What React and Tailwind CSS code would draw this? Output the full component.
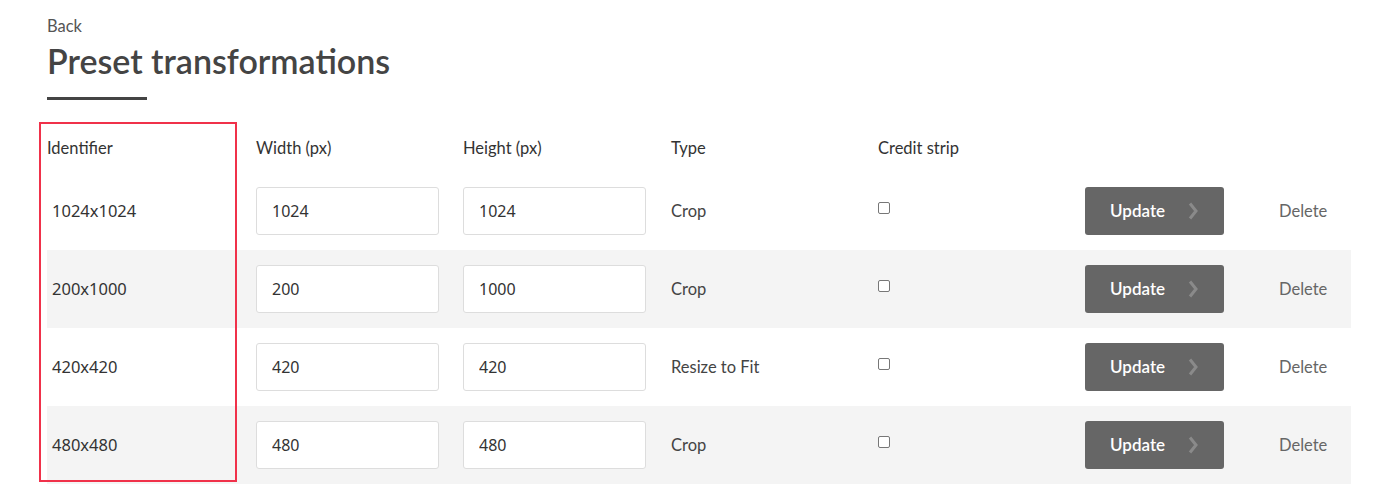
import React from 'react';

const rows = [
  { id: '1024x1024', w: '1024', h: '1024', type: 'Crop' },
  { id: '200x1000', w: '200', h: '1000', type: 'Crop' },
  { id: '420x420', w: '420', h: '420', type: 'Resize to Fit' },
  { id: '480x480', w: '480', h: '480', type: 'Crop' },
];

const cols = 'grid grid-cols-[209px_207px_208px_207px_207px_194px_72px] items-center';

const Chevron = () => (
  <svg width="10" height="18" viewBox="0 0 10 18" fill="none" stroke="#8a8a8a" strokeWidth="3">
    <path d="M2 1.5 L8 9 L2 16.5" />
  </svg>
);

const App = () => {
  return (
    <div className="min-h-[492px] bg-white pl-[47px] pt-[15px] font-['Lato',sans-serif] text-[#333]">
      <div className="text-[16.5px] leading-[22px] text-[#555]">Back</div>
      <h1 className="mt-[3px] text-[34px] leading-[42px] font-semibold text-[#444]">Preset transformations</h1>
      <div className="mt-[15px] h-[3px] w-[100px] bg-[#444]" />

      <div className="relative mt-[22px] w-[1304px]">
        {/* highlight box over the identifier column */}
        <div className="pointer-events-none absolute left-[-8px] top-[0px] h-[360px] w-[198px] border-2 border-[#f0314a] z-10" />

        <div className={`${cols} h-[50px] pt-[2px] text-[16.5px] text-[#333]`}>
          <div>Identifier</div>
          <div>Width (px)</div>
          <div>Height (px)</div>
          <div>Type</div>
          <div>Credit strip</div>
          <div />
          <div />
        </div>

        {rows.map((r, i) => (
          <div key={r.id} className={`${cols} h-[78px] ${i % 2 === 1 ? 'bg-[#f4f4f4]' : 'bg-white'}`}>
            <div className="pl-[5px] font-['Noto_Sans',sans-serif] text-[16.5px]">{r.id}</div>
            <div>
              <input
                readOnly
                value={r.w}
                className="h-[48px] w-[183px] rounded-[3px] border border-[#ddd] bg-white px-[15px] font-['Noto_Sans',sans-serif] text-[16px] text-[#333] outline-none"
              />
            </div>
            <div>
              <input
                readOnly
                value={r.h}
                className="h-[48px] w-[183px] rounded-[3px] border border-[#ddd] bg-white px-[15px] font-['Noto_Sans',sans-serif] text-[16px] text-[#333] outline-none"
              />
            </div>
            <div className="text-[16.5px] text-[#444]">{r.type}</div>
            <div className="pb-[7px]">
              <span className="block h-[12px] w-[12px] rounded-[2px] border border-[#777] bg-white" />
            </div>
            <div>
              <button className="flex h-[48px] w-[139px] items-center rounded-[3px] bg-[#666] pl-[25px] pr-[26px] text-[17px] font-semibold text-white">
                <span className="flex-1 text-left">Update</span>
                <Chevron />
              </button>
            </div>
            <div className="text-[16.5px] text-[#666]">Delete</div>
          </div>
        ))}
      </div>
    </div>
  );
};

export default App;
